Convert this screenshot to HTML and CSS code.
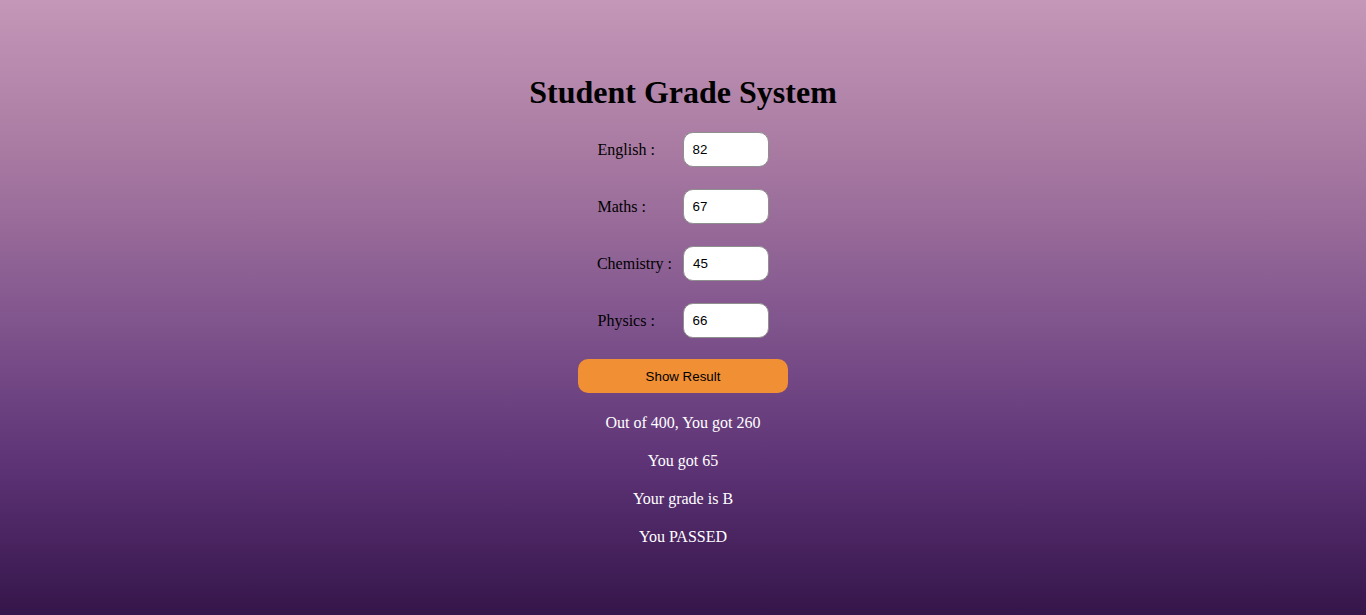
FILE: index.html
```html
<!DOCTYPE html>
<html lang="en">
<head>
<meta charset="utf-8">
<title>Student Grade System</title>
<link rel="stylesheet" href="styles.css">
</head>
<body>
<main class="page">
  <h1 class="title">Student Grade System</h1>
  <form class="form">
    <div class="row"><label class="label" for="eng">English :</label><input class="field" id="eng" type="text" value="82"></div>
    <div class="row"><label class="label" for="mat">Maths :</label><input class="field" id="mat" type="text" value="67"></div>
    <div class="row"><label class="label" for="chem">Chemistry :</label><input class="field" id="chem" type="text" value="45"></div>
    <div class="row"><label class="label" for="phy">Physics :</label><input class="field" id="phy" type="text" value="66"></div>
    <button class="btn" type="button">Show Result</button>
  </form>
  <div class="results">
    <p class="line">Out of 400, You got 260</p>
    <p class="line">You got 65</p>
    <p class="line">Your grade is B</p>
    <p class="line">You PASSED</p>
  </div>
</main>
</body>
</html>
```

FILE: styles.css
```css
html, body {
  margin: 0;
  padding: 0;
  height: 100%;
}
body {
  background: linear-gradient(to bottom, #c497b8 0%, #a87aa2 25%, #84588f 50%, #5e3477 75%, #35154a 100%);
  font-family: "Liberation Serif", "Times New Roman", serif;
  color: #000;
}
.page {
  min-height: 100vh;
  box-sizing: border-box;
  display: flex;
  flex-direction: column;
  align-items: center;
  padding-top: 74px;
}
.title {
  margin: 0;
  font-size: 32px;
  line-height: 37px;
  font-weight: bold;
}
.form {
  display: flex;
  flex-direction: column;
  align-items: center;
  gap: 22px;
  margin-top: 21px;
}
.row {
  display: flex;
  align-items: center;
}
.label {
  font-size: 16px;
  min-width: 74px;
  margin-right: 11px;
}
.field {
  box-sizing: border-box;
  width: 86px;
  height: 35px;
  border: 1px solid #8f8f8f;
  border-radius: 10px;
  background: #fff;
  padding: 0 9px;
  font-family: "Liberation Sans", Arial, sans-serif;
  font-size: 13.33px;
  color: #000;
  outline: none;
}
.btn {
  box-sizing: border-box;
  width: 210px;
  height: 34px;
  margin-top: -1px;
  border: none;
  border-radius: 10px;
  background: #f08f34;
  font-family: "Liberation Sans", Arial, sans-serif;
  font-size: 13.33px;
  color: #000;
}
.results {
  display: flex;
  flex-direction: column;
  align-items: center;
  gap: 20px;
  margin-top: 21px;
}
.line {
  margin: 0;
  font-size: 16px;
  line-height: 18px;
  color: #fff;
}
```
